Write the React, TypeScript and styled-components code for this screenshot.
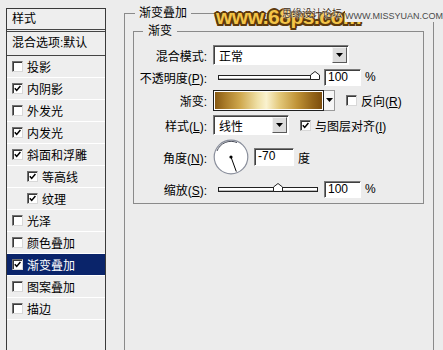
import React from 'react';
import styled, { createGlobalStyle } from 'styled-components';

const GlobalStyle = createGlobalStyle`
  html, body {
    margin: 0;
    padding: 0;
    background: #ececec;
  }
  body {
    font-family: "Liberation Sans", "Noto Sans CJK SC", sans-serif;
    font-size: 12px;
    color: #000;
  }
`;

const Page = styled.div`
  position: relative;
  display: flex;
  align-items: flex-start;
  width: 443px;
  height: 350px;
  overflow: hidden;
  background: #ececec;
`;

/* ---------- left list ---------- */

const StyleList = styled.div`
  margin: 8px 0 0 6px;
  width: 100px;
  height: 360px;
  box-sizing: border-box;
  border: 1px solid #3a3a3a;
  background: #eeeeee;
  display: flex;
  flex-direction: column;
  flex-shrink: 0;
`;

const ListHeader = styled.div`
  height: 20px;
  line-height: 20px;
  padding-left: 5px;
  border-bottom: 3px double #444;
`;

const BlendRow = styled.div`
  height: 23px;
  line-height: 23px;
  padding-left: 5px;
  border-bottom: 1px solid #444;
`;

const ListItem = styled.div<{ $indent?: boolean; $selected?: boolean }>`
  height: 21px;
  display: flex;
  align-items: center;
  gap: 4px;
  padding-left: ${(p) => (p.$indent ? 20 : 5)}px;
  border-bottom: 1px solid #fff;
  background: ${(p) => (p.$selected ? '#0a246a' : 'transparent')};
  color: ${(p) => (p.$selected ? '#fff' : '#000')};
`;

const Box = styled.span`
  width: 11px;
  height: 11px;
  box-sizing: border-box;
  flex-shrink: 0;
  background: #fff;
  border: 1px solid;
  border-color: #707070 #d8d8d8 #d8d8d8 #707070;
  box-shadow: inset 1px 1px 0 #3a3a3a;
  display: flex;
  align-items: center;
  justify-content: center;
`;

const CheckBox: React.FC<{ checked?: boolean }> = ({ checked }) => (
  <Box>
    {checked && (
      <svg width="9" height="9" viewBox="0 0 9 9">
        <path d="M1.8 4.2 L3.7 6.4 L7.4 2" fill="none" stroke="#000" strokeWidth="1.5" />
      </svg>
    )}
  </Box>
);

/* ---------- right groups ---------- */

const OuterGroup = styled.fieldset`
  margin: 6px 0 0 18px;
  padding: 0;
  width: 310px;
  height: 370px;
  box-sizing: border-box;
  border: 1px solid #8a8a8a;
  min-width: 0;
  flex-shrink: 0;
`;

const Legend = styled.legend<{ $offset: number; $pad: number }>`
  margin-left: ${(p) => p.$offset}px;
  padding: 0 ${(p) => p.$pad}px;
  line-height: 14px;
  font-size: 12px;
`;

const InnerGroup = styled.fieldset`
  margin: 4px 9px 0 8px;
  padding: 6px 0 1px 0;
  border: 1px solid #8a8a8a;
  min-width: 0;
`;

const Rows = styled.div`
  display: flex;
  flex-direction: column;
`;

const Row = styled.div<{ $h: number }>`
  height: ${(p) => p.$h}px;
  display: flex;
  align-items: center;
`;

const Label = styled.span`
  width: 73px;
  margin-right: 6px;
  text-align: right;
  white-space: nowrap;
  flex-shrink: 0;
`;

const sunken = `
  border: 1px solid;
  border-color: #7a7a7a #ffffff #ffffff #7a7a7a;
  box-shadow: inset 1px 1px 0 #404040;
`;

const Select = styled.div<{ $w: number }>`
  width: ${(p) => p.$w}px;
  height: 20px;
  box-sizing: border-box;
  ${sunken}
  background: #fff;
  display: flex;
  align-items: center;
  padding: 1px 1px 1px 5px;
`;

const SelectText = styled.span`
  flex: 1;
`;

const DropButton = styled.span`
  width: 15px;
  height: 16px;
  box-sizing: border-box;
  background: #dcdcdc;
  border: 1px solid;
  border-color: #f4f4f4 #5a5a5a #5a5a5a #f4f4f4;
  display: flex;
  align-items: center;
  justify-content: center;
`;

const Arrow = () => (
  <svg width="7" height="4" viewBox="0 0 7 4">
    <path d="M0 0 H7 L3.5 4 Z" fill="#000" />
  </svg>
);

const Slider = styled.div`
  position: relative;
  margin-left: 5px;
  width: 100px;
  height: 5px;
  box-sizing: border-box;
  border: 1px solid #222;
  background: #fff;
  box-shadow: inset 0 -1px 0 #bbb;
`;

const Thumb = styled.svg`
  position: absolute;
  top: -5px;
  margin-left: -5px;
`;

const NumInput = styled.div<{ $w: number }>`
  margin-left: 6px;
  width: ${(p) => p.$w}px;
  height: 17px;
  box-sizing: border-box;
  ${sunken}
  background: #fff;
  padding-left: 3px;
  line-height: 15px;
`;

const Unit = styled.span`
  margin-left: 4px;
`;

const Swatch = styled.div`
  display: flex;
  align-items: stretch;
  height: 21px;
`;

const GradientBar = styled.div`
  width: 111px;
  box-sizing: border-box;
  border: 1px solid #202020;
  box-shadow: inset 0 0 0 1px #fff;
  background: linear-gradient(
    to right,
    #835510 0%,
    #a87a28 10%,
    #cfa84e 24%,
    #efe0a6 40%,
    #faf2cf 48%,
    #e3c87a 60%,
    #c09337 76%,
    #94651a 90%,
    #7a4b0c 100%
  );
`;

const SwatchArrow = styled.span`
  width: 11px;
  box-sizing: border-box;
  border: 1px solid #9a9a9a;
  border-left: none;
  background: #f6f6f6;
  display: flex;
  align-items: center;
  justify-content: center;
`;

const Option = styled.label<{ $gap: number }>`
  margin-left: ${(p) => p.$gap}px;
  display: flex;
  align-items: center;
  gap: 4px;
`;

const Dial = styled.svg`
  flex-shrink: 0;
`;

const Watermark = styled.div`
  position: absolute;
  left: 216px;
  top: 5px;
  font-family: "Liberation Sans", sans-serif;
  font-weight: bold;
  font-size: 21px;
  line-height: 24px;
  letter-spacing: -0.5px;
  color: #f3c447;
  text-shadow: -2px 0 0 #5e3a0c, 2px 0 0 #5e3a0c, 0 -2px 0 #5e3a0c, 0 2px 0 #5e3a0c,
    -1.5px -1.5px 0 #5e3a0c, 1.5px 1.5px 0 #5e3a0c, -1.5px 1.5px 0 #5e3a0c, 1.5px -1.5px 0 #5e3a0c;
  pointer-events: none;
`;

const ForumName = styled.div`
  position: absolute;
  left: 282px;
  top: 6px;
  font-family: "Noto Sans CJK SC", sans-serif;
  font-size: 10px;
  line-height: 13px;
  color: #3b2a12;
  text-shadow: 0 0 2px #fff, 0 0 1px #fff;
  pointer-events: none;
`;

const ForumUrl = styled.div`
  position: absolute;
  left: 345px;
  top: 11px;
  font-family: "Liberation Sans", sans-serif;
  font-size: 9px;
  line-height: 11px;
  color: #4a4a4a;
  background: #ececec;
  pointer-events: none;
`;

const items: { name: string; checked: boolean; indent?: boolean; selected?: boolean }[] = [
  { name: '投影', checked: false },
  { name: '内阴影', checked: true },
  { name: '外发光', checked: false },
  { name: '内发光', checked: true },
  { name: '斜面和浮雕', checked: true },
  { name: '等高线', checked: true, indent: true },
  { name: '纹理', checked: true, indent: true },
  { name: '光泽', checked: false },
  { name: '颜色叠加', checked: false },
  { name: '渐变叠加', checked: true, selected: true },
  { name: '图案叠加', checked: false },
  { name: '描边', checked: false },
];

const SliderControl: React.FC<{ pos: number }> = ({ pos }) => (
  <Slider>
    <Thumb width="10" height="9" viewBox="0 0 10 9" style={{ left: `${pos}%` }}>
      <path d="M0.5 8.5 V4 L5 0.5 L9.5 4 V8.5 Z" fill="#fff" stroke="#222" />
    </Thumb>
  </Slider>
);

const App: React.FC = () => {
  const angle = (-70 * Math.PI) / 180;
  const lx = 18 + Math.cos(angle) * 15.5;
  const ly = 18 - Math.sin(angle) * 15.5;

  return (
    <Page>
      <GlobalStyle />
      <StyleList>
        <ListHeader>样式</ListHeader>
        <BlendRow>混合选项:默认</BlendRow>
        {items.map((it) => (
          <ListItem key={it.name} $indent={it.indent} $selected={it.selected}>
            <CheckBox checked={it.checked} />
            <span>{it.name}</span>
          </ListItem>
        ))}
      </StyleList>

      <OuterGroup>
        <Legend $offset={10} $pad={4}>渐变叠加</Legend>
        <InnerGroup>
          <Legend $offset={9} $pad={5}>渐变</Legend>
          <Rows>
            <Row $h={22}>
              <Label>混合模式:</Label>
              <Select $w={136}>
                <SelectText>正常</SelectText>
                <DropButton>
                  <Arrow />
                </DropButton>
              </Select>
            </Row>
            <Row $h={22}>
              <Label>
                不透明度(<u>P</u>):
              </Label>
              <SliderControl pos={98} />
              <NumInput $w={37}>100</NumInput>
              <Unit>%</Unit>
            </Row>
            <Row $h={24}>
              <Label>渐变:</Label>
              <Swatch>
                <GradientBar />
                <SwatchArrow>
                  <Arrow />
                </SwatchArrow>
              </Swatch>
              <Option $gap={11}>
                <CheckBox />
                <span>
                  反向(<u>R</u>)
                </span>
              </Option>
            </Row>
            <Row $h={26}>
              <Label>
                样式(<u>L</u>):
              </Label>
              <Select $w={76}>
                <SelectText>线性</SelectText>
                <DropButton>
                  <Arrow />
                </DropButton>
              </Select>
              <Option $gap={11}>
                <CheckBox checked />
                <span>
                  与图层对齐(<u>I</u>)
                </span>
              </Option>
            </Row>
            <Row $h={38}>
              <Label>
                角度(<u>N</u>):
              </Label>
              <Dial width="36" height="36" viewBox="0 0 36 36">
                <circle cx="18" cy="18" r="16.8" fill="#fff" stroke="#8a8f9c" strokeWidth="1.2" />
                <path d="M4 12 A15 15 0 0 1 24 3.6" fill="none" stroke="#4a4e5a" strokeWidth="1" />
                <circle cx="18" cy="18" r="1.6" fill="#000" />
                <line x1="18" y1="18" x2={lx} y2={ly} stroke="#000" strokeWidth="1" />
              </Dial>
              <NumInput $w={40} style={{ marginLeft: 5, height: 18 }}>
                -70
              </NumInput>
              <Unit>度</Unit>
            </Row>
            <Row $h={26}>
              <Label>
                缩放(<u>S</u>):
              </Label>
              <SliderControl pos={60} />
              <NumInput $w={37}>100</NumInput>
              <Unit>%</Unit>
            </Row>
          </Rows>
        </InnerGroup>
      </OuterGroup>

      <Watermark>www.68ps.com</Watermark>
      <ForumName>思缘设计论坛</ForumName>
      <ForumUrl>WWW.MISSYUAN.COM</ForumUrl>
    </Page>
  );
};

export default App;
